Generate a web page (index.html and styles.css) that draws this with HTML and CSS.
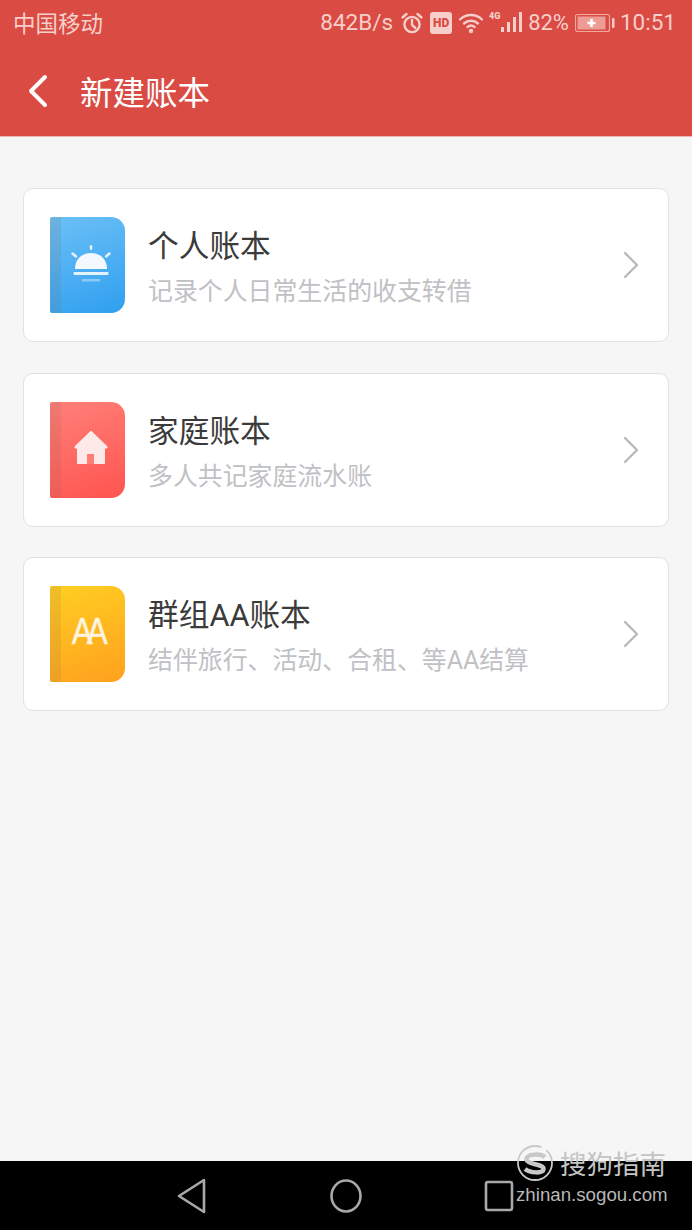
FILE: index.html
```html
<!DOCTYPE html>
<html lang="zh-CN">
<head>
  <meta charset="UTF-8">
  <title>新建账本</title>
  <link rel="stylesheet" href="styles.css">
</head>
<body>
  <div class="phone">
    <header class="topbar">
      <div class="status">
        <span class="carrier">中国移动</span>
        <div class="status-right">
          <span class="speed">842B/s</span>
          <svg class="st-alarm" width="24" height="24" viewBox="0 0 24 24" fill="none" stroke="#f7cfca" stroke-width="2.4">
            <circle cx="12" cy="13.500" r="7.600"/>
            <path d="M12 9v5l3.400 3M2.500 6.500 6.500 3M21.500 6.500 17.500 3" stroke-linecap="round"/>
          </svg>
          <span class="st-hd">HD</span>
          <svg class="st-wifi" width="26" height="22" viewBox="0 0 26 22" fill="none" stroke="#f7cfca" stroke-width="2.400" stroke-linecap="round">
            <path d="M2 7.500C8 1.500 18 1.500 24 7.500M6 11.500C10 7.800 16 7.800 20 11.500M9.500 15C11.500 13.400 14.500 13.400 16.500 15"/>
            <circle cx="13" cy="19" r="2.200" fill="#f7cfca" stroke="none"/>
          </svg>
          <svg class="st-signal" width="33" height="24" viewBox="0 0 33 24" fill="#f7cfca">
            <text x="0" y="8" class="st-4g">4G</text>
            <rect x="12" y="16" width="3" height="5"/>
            <rect x="18" y="11" width="3" height="10"/>
            <rect x="24" y="6" width="3" height="15"/>
            <rect x="30" y="1" width="3" height="20"/>
          </svg>
          <span class="battery-pct">82%</span>
          <svg class="st-battery" width="40" height="20" viewBox="0 0 40 20">
            <rect x="0.500" y="1.500" width="34" height="17" rx="2" fill="none" stroke="#f2a8a1" stroke-width="1.200"/>
            <rect x="2.500" y="3.500" width="28" height="13" fill="#ee9d96"/>
            <path d="M16.500 6v8M12.500 10h8" stroke="#fff" stroke-width="2.600"/>
            <rect x="37" y="5" width="2.500" height="10" rx="1" fill="#f7cfca"/>
          </svg>
          <span class="clock">10:51</span>
        </div>
      </div>
      <div class="titlebar">
        <svg class="back" width="22" height="34" viewBox="0 0 22 34" fill="none" stroke="#fff" stroke-width="4" stroke-linecap="round" stroke-linejoin="round">
          <path d="M18 3 4 17l14 14"/>
        </svg>
        <h1>新建账本</h1>
      </div>
    </header>

    <main class="book-list">
      <div class="book-card">
        <div class="book book-blue">
          <svg width="40" height="40" viewBox="0 0 40 40" fill="#fff">
            <path d="M4 24C4 13 12 8 20 8S36 13 36 24Z" fill="#f3f9fe"/>
            <rect x="2.500" y="27" width="35" height="3" rx="1" fill="#e4f2fd"/>
            <rect x="10.500" y="34" width="19" height="2.500" rx="1" fill="#8cc9f5"/>
            <rect x="18.800" y="0" width="2.400" height="5" rx="1.200" fill="#e4f2fd"/>
            <path d="M1.500 8.500 5 11.500M38.500 8.500 35 11.500" stroke="#e4f2fd" stroke-width="2.400" stroke-linecap="round"/>
          </svg>
        </div>
        <div class="book-text">
          <div class="book-name">个人账本</div>
          <div class="book-desc">记录个人日常生活的收支转借</div>
        </div>
        <svg class="chevron" width="18" height="28" viewBox="0 0 18 28" fill="none" stroke="#b9b9b9" stroke-width="2.400" stroke-linecap="round" stroke-linejoin="round">
          <path d="M3 2l12 12L3 26"/>
        </svg>
      </div>

      <div class="book-card">
        <div class="book book-red">
          <svg class="home" width="34" height="34" viewBox="0 0 34 34" fill="#fdeae8" stroke="#fdeae8" stroke-width="1" stroke-linejoin="round">
            <path d="M17 1 33 16.500V18H30.500V33.500H3.500V18H1V16.500Z"/>
            <rect x="13" y="24" width="7" height="10" fill="#ff7d75" stroke="none"/>
          </svg>
        </div>
        <div class="book-text">
          <div class="book-name">家庭账本</div>
          <div class="book-desc">多人共记家庭流水账</div>
        </div>
        <svg class="chevron" width="18" height="28" viewBox="0 0 18 28" fill="none" stroke="#b9b9b9" stroke-width="2.400" stroke-linecap="round" stroke-linejoin="round">
          <path d="M3 2l12 12L3 26"/>
        </svg>
      </div>

      <div class="book-card">
        <div class="book book-yellow">
          <span class="aa">AA</span>
        </div>
        <div class="book-text">
          <div class="book-name">群组AA账本</div>
          <div class="book-desc">结伴旅行、活动、合租、等AA结算</div>
        </div>
        <svg class="chevron" width="18" height="28" viewBox="0 0 18 28" fill="none" stroke="#b9b9b9" stroke-width="2.400" stroke-linecap="round" stroke-linejoin="round">
          <path d="M3 2l12 12L3 26"/>
        </svg>
      </div>
    </main>

    <nav class="navbar">
      <svg width="32" height="36" viewBox="0 0 32 36" fill="none" stroke="#a8a8a8" stroke-width="2.600" stroke-linejoin="round">
        <path d="M28 2 3 18l25 16Z"/>
      </svg>
      <svg width="32" height="34" viewBox="0 0 32 34" fill="none" stroke="#a8a8a8" stroke-width="2.600">
        <ellipse cx="16" cy="17" rx="14.500" ry="15.500"/>
      </svg>
      <svg width="30" height="32" viewBox="0 0 30 32" fill="none" stroke="#a8a8a8" stroke-width="2.600" stroke-linejoin="round">
        <rect x="2" y="2" width="26" height="28" rx="2"/>
      </svg>
    </nav>

    <div class="watermark">
      <div class="wm-top">
        <svg width="38" height="38" viewBox="0 0 38 38" fill="none" stroke="#c8c8c8">
          <circle cx="19" cy="19" r="17" stroke-width="1.800" stroke-dasharray="86 6"/>
          <path d="M29 13C25 9.500 11 9.500 10.500 15S28 20 27.500 25 14 29 9 25" stroke-width="4.500"/>
        </svg>
        <span class="wm-name">搜狗指南</span>
      </div>
      <div class="wm-url">zhinan.sogou.com</div>
    </div>
  </div>
</body>
</html>
```

FILE: styles.css
```css
* {
  box-sizing: border-box;
}

body {
  margin: 0;
  background: #f6f6f6;
  font-family: "Roboto", "Noto Sans CJK SC", sans-serif;
}

.phone {
  position: relative;
  width: 692px;
  height: 1230px;
  display: flex;
  flex-direction: column;
  overflow: hidden;
}

.topbar {
  background: #d94b43;
  height: 137px;
  border-bottom: 1px solid #eeb7b2;
}

.status {
  height: 46px;
  padding: 0 16px 0 13px;
  display: flex;
  align-items: center;
  justify-content: space-between;
  color: #f7cfca;
  font-size: 22.500px;
}

.carrier,
.speed,
.battery-pct,
.clock {
  margin-bottom: 2px;
}

.status-right {
  display: flex;
  align-items: center;
}

.speed {
  margin-right: 7px;
}

.st-hd {
  width: 22px;
  height: 22px;
  margin: 0 6px;
  border-radius: 3px;
  background: #f7cfca;
  color: #d94b43;
  font-size: 12px;
  font-weight: 900;
  line-height: 22px;
  text-align: center;
}

.st-4g {
  font-size: 9px;
  font-weight: 900;
}

.st-signal {
  margin-left: 5px;
}

.battery-pct {
  margin-left: 6px;
  margin-right: 6px;
  font-size: 22px;
}

.clock {
  margin-left: 5px;
}

.titlebar {
  display: flex;
  align-items: center;
  height: 90px;
  padding-left: 27px;
  color: #fff;
}

.titlebar h1 {
  margin: 0 0 2px 31px;
  font-size: 32.500px;
  font-weight: 400;
}

.book-list {
  flex: 1;
  padding: 51px 23px 0;
  display: flex;
  flex-direction: column;
  gap: 31px;
}

.book-card {
  display: flex;
  align-items: center;
  height: 154px;
  padding: 0 28px 0 26px;
  background: #fff;
  border: 1px solid #e2e2e2;
  border-radius: 10px;
}

.book-card + .book-card + .book-card {
  margin-top: -1px;
}

.book {
  position: relative;
  flex: none;
  display: flex;
  align-items: center;
  justify-content: center;
  width: 75px;
  height: 96px;
  padding-left: 6px;
  border-radius: 2px 14px 14px 2px;
}

.book::before {
  content: "";
  position: absolute;
  left: 0;
  top: 0;
  bottom: 0;
  width: 11px;
  border-radius: 2px 0 0 2px;
  background: rgba(120, 90, 80, 0.13);
}

.book-blue {
  background: linear-gradient(160deg, #6cc0f6, #2f9ff0);
}

.book-red {
  background: linear-gradient(160deg, #ff8079, #ff544f);
}

.book-yellow {
  background: linear-gradient(160deg, #ffcf22, #ffa01e);
}

.home {
  margin-top: -6px;
}

.aa {
  color: #fdf3df;
  font-family: "Liberation Sans", sans-serif;
  font-size: 37px;
  letter-spacing: -7px;
  margin: -5px 0 0 -7px;
  transform: scaleX(0.85);
  -webkit-text-stroke: 0.5px #fdf3df;
}

.book-text {
  flex: 1;
  margin-left: 23px;
  padding-top: 5px;
}

.book-name {
  color: #3b3b3b;
  font-size: 30.700px;
  line-height: 40px;
}

.book-desc {
  margin-top: 9px;
  color: #bfc1c5;
  font-size: 24.900px;
  line-height: 32px;
}

.navbar {
  height: 69px;
  padding: 0 178px 0 176px;
  display: flex;
  align-items: center;
  justify-content: space-between;
  background: #000;
}

.watermark {
  position: absolute;
  left: 516px;
  top: 1143px;
  color: #b8b8b8;
}

.wm-top {
  display: flex;
  align-items: center;
}

.wm-name {
  margin-left: 6px;
  color: #c4c4c4;
  font-size: 26.500px;
}

.wm-url {
  margin-top: 2px;
  font-family: "Liberation Sans", sans-serif;
  font-size: 18.700px;
}
```
